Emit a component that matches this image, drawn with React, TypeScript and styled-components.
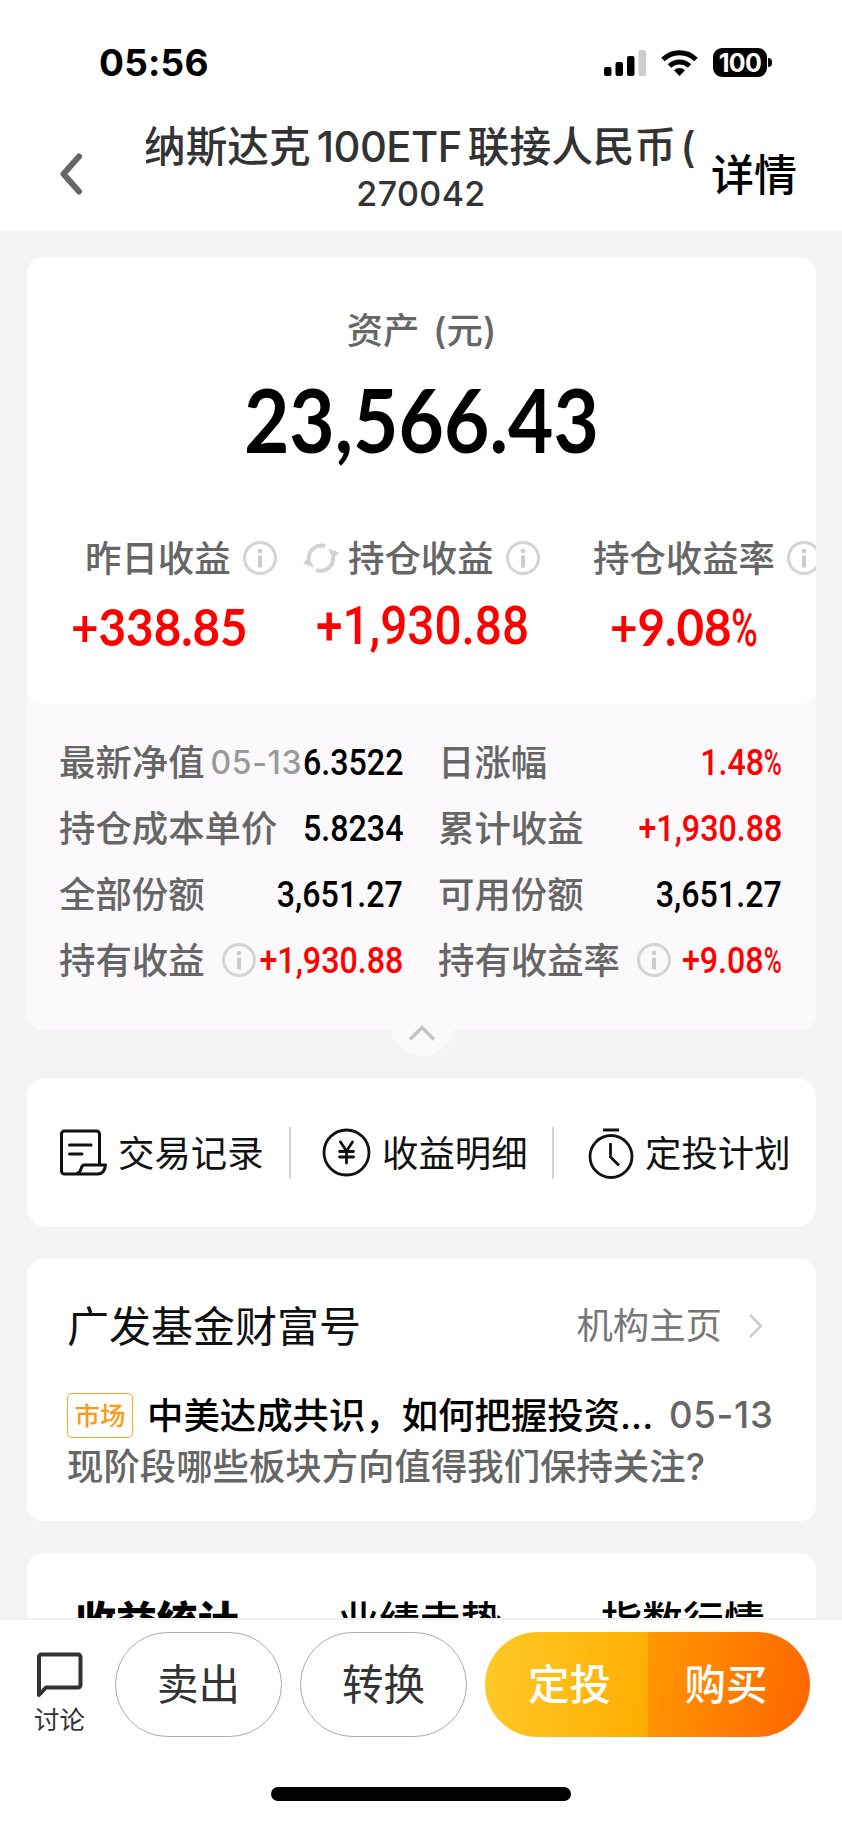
import React from "react";
import styled, { createGlobalStyle } from "styled-components";

const Global = createGlobalStyle`
  * { box-sizing: border-box; }
  body {
    margin: 0;
    background: #f4f4f4;
    font-family: Inter, "Noto Sans CJK SC", sans-serif;
    color: #000;
  }
`;

const Screen = styled.div`
  width: 842px;
  height: 1823px;
  overflow: hidden;
  display: flex;
  flex-direction: column;
  white-space: nowrap;
`;

const StatusBar = styled.div`
  height: 125px;
  flex: none;
  background: #fff;
  display: flex;
  justify-content: space-between;
  align-items: center;
  padding: 0 70px 0 99px;
`;
const Clock = styled.div`
  font-size: 37px;
  font-weight: 700;
  letter-spacing: 0.2px;
`;
const StatusIcons = styled.div`
  display: flex;
  align-items: center;
  gap: 15px;
`;
const Battery = styled.div`
  position: relative;
  width: 54px;
  height: 29px;
  border-radius: 9px;
  background: #000;
  color: #fff;
  font-size: 25px;
  font-weight: 700;
  line-height: 30px;
  text-align: center;
  letter-spacing: -0.6px;
  margin-right: 5px;
  &::after {
    content: "";
    position: absolute;
    right: -5px;
    top: 10px;
    width: 4px;
    height: 9px;
    border-radius: 0 4px 4px 0;
    background: #000;
  }
`;

const NavBar = styled.header`
  height: 106px;
  flex: none;
  background: #fff;
  display: flex;
  color: #333;
`;
const Back = styled.div`
  width: 146px;
  padding: 27px 0 0 57px;
`;
const TitleBlock = styled.div`
  width: 550px;
  display: flex;
  flex-direction: column;
  align-items: center;
`;
const TitleClip = styled.div`
  width: 550px;
  height: 46px;
  overflow: hidden;
  display: flex;
  font-size: 41.7px;
  line-height: 44px;
  font-weight: 500;
`;
const TitleText = styled.div`
  margin-left: -2px;
`;
const TitleLatin = styled.span`
  margin: 0 6px 0 6px;
  letter-spacing: -0.5px;
`;
const TitleParen = styled.span`
  margin-left: 4px;
`;
const Code = styled.div`
  font-size: 34px;
  line-height: 44px;
  font-weight: 500;
  letter-spacing: 0.4px;
  margin-top: 1px;
`;
const DetailLink = styled.div`
  margin: 24px 0 0 15px;
  font-size: 43px;
  line-height: 52px;
  font-weight: 500;
  color: #000;
`;

const Body = styled.main`
  height: 1387px;
  flex: none;
  overflow: hidden;
  padding: 26px 26px 0 27px;
`;

const Card = styled.section<{ $h: number; $gap: number; $r?: number }>`
  height: ${(p) => p.$h}px;
  margin-bottom: ${(p) => p.$gap}px;
  border-radius: ${(p) => p.$r ?? 16}px;
  background: #fff;
`;

const AssetCard = styled(Card)`
  position: relative;
  background: #fbf9fb;
`;
const Summary = styled.div`
  height: 447px;
  border-radius: 16px;
  background: #fff;
  overflow: hidden;
`;
const AssetLabel = styled.div`
  padding-top: 49px;
  font-size: 36.4px;
  line-height: 50px;
  text-align: center;
  word-spacing: 4px;
  font-weight: 500;
  color: #666;
`;
const Num = styled.span<{ $size: number; $x?: number; $origin?: string; $red?: boolean; $face?: string; $weight?: number }>`
  display: inline-block;
  font-family: ${(p) => p.$face ?? "Lato"}, sans-serif;
  font-size: ${(p) => p.$size}px;
  font-weight: ${(p) => p.$weight ?? 700};
  transform: scaleX(${(p) => p.$x ?? 0.87});
  transform-origin: ${(p) => p.$origin ?? "center"};
  color: ${(p) => (p.$red ? "#fe0000" : "#000")};
`;
const Percent = styled.span`
  display: inline-block;
  width: 0.56em;
  font-family: Roboto, sans-serif;
  font-weight: 500;
  transform: scaleX(0.76);
  transform-origin: left;
`;
const Total = styled.div`
  height: 100px;
  margin-top: 13px;
  line-height: 100px;
  text-align: center;
`;
const Stats = styled.div`
  display: grid;
  grid-template-columns: repeat(3, 263px);
  margin-top: 58px;
`;
const Stat = styled.div<{ $pad: number }>`
  display: flex;
  flex-direction: column;
  padding-left: ${(p) => p.$pad}px;
`;
const StatLabel = styled.div`
  display: flex;
  align-items: center;
  height: 58px;
  font-size: 36.4px;
  color: #666;
  font-weight: 500;
`;
const StatValue = styled.div<{ $shift: number }>`
  height: 70px;
  line-height: 70px;
  margin-top: 6px;
  margin-left: ${(p) => p.$shift}px;
`;
const InfoSvg = styled.svg<{ $ml?: number }>`
  flex: none;
  margin-left: ${(p) => p.$ml ?? 12}px;
  margin-top: 4px;
`;
const RefreshSvg = styled.svg`
  flex: none;
  margin: 4px 9px 0 0;
`;

const Details = styled.div`
  display: grid;
  grid-template-columns: 344px 344px;
  column-gap: 35px;
  grid-auto-rows: 66px;
  padding: 23px 0 0 32px;
`;
const Detail = styled.div`
  display: flex;
  align-items: center;
  font-size: 36.4px;
  font-weight: 500;
  color: #666;
`;
const NavDate = styled.span`
  width: 93px;
  margin: 4px 0 0 6px;
  font-size: 32px;
  letter-spacing: 0.6px;
  color: #999;
`;
const DetailValue = styled.div`
  width: 0;
  margin: 4px 0 0 auto;
  display: flex;
  justify-content: flex-end;
`;
const Collapse = styled.div`
  position: absolute;
  left: 363px;
  top: 735px;
  width: 64px;
  height: 64px;
  border-radius: 50%;
  background: #fbf9fb;
  display: flex;
  justify-content: center;
  padding-top: 32px;
`;

const ActionCard = styled(Card)`
  display: grid;
  grid-template-columns: repeat(3, 263px);
  align-items: center;
`;
const Action = styled.div<{ $line?: boolean }>`
  position: relative;
  height: 52px;
  display: flex;
  align-items: center;
  padding-left: 32px;
  font-size: 36.4px;
  color: #111;
  svg { flex: none; margin-right: 11px; }
  &::after {
    content: "";
    display: ${(p) => (p.$line ? "block" : "none")};
    position: absolute;
    right: -1px;
    top: 0;
    width: 2px;
    height: 52px;
    background: #d2d2d2;
  }
`;
const ActionText = styled.span`
  margin-top: -3px;
`;

const FundCard = styled(Card)`
  padding: 36px 40px 0 40px;
`;
const FundHead = styled.div`
  display: flex;
  align-items: center;
  height: 56px;
  font-size: 42px;
  color: #111;
`;
const FundLink = styled.div`
  margin-left: auto;
  margin-right: 13px;
  display: flex;
  align-items: center;
  font-size: 36.4px;
  color: #777;
  svg { margin: 6px 0 0 26px; }
`;
const NewsRow = styled.div`
  display: flex;
  align-items: center;
  height: 52px;
  margin-top: 38px;
  font-size: 36.4px;
  font-weight: 500;
`;
const Tag = styled.span`
  width: 66px;
  height: 45px;
  line-height: 43px;
  border: 1.5px solid #f9a72b;
  border-radius: 5px;
  color: #f99c12;
  font-size: 25.5px;
  font-weight: 500;
  text-align: center;
  margin: 0 14px 0 0;
`;
const Headline = styled.span`
  width: 522px;
  margin-top: -4px;
`;
const NewsDate = styled.span`
  color: #666;
  font-size: 36.5px;
  font-weight: 550;
  letter-spacing: 0.7px;
`;
const NewsSub = styled.div`
  height: 52px;
  line-height: 52px;
  font-size: 36.4px;
  font-weight: 500;
  color: #666;
`;

const Tabs = styled(Card)`
  display: grid;
  grid-template-columns: repeat(3, 263px);
  padding: 40px 0 0 48px;
  font-size: 40.9px;
  line-height: 56px;
  font-weight: 500;
`;
const Tab = styled.div<{ $on?: boolean }>`
  font-weight: ${(p) => (p.$on ? 900 : 500)};
`;

const Footer = styled.footer`
  position: relative;
  height: 205px;
  flex: none;
  background: #fff;
  border-top: 2px solid #f0f0f0;
`;
const Buttons = styled.div`
  display: flex;
  padding: 12px 0 0 16px;
  color: #333;
`;
const Discuss = styled.div`
  width: 99px;
  padding: 20px 0 0 18px;
  font-size: 25.5px;
  line-height: 34px;
  svg { display: block; margin: 0 0 4px 2px; }
`;
const Pill = styled.div`
  width: 167px;
  height: 105px;
  margin-right: 18px;
  border: 1.5px solid #aaa;
  border-radius: 53px;
  font-size: 41.5px;
  line-height: 104px;
  text-align: center;
`;
const Trade = styled.div`
  display: flex;
  width: 325px;
  height: 105px;
  border-radius: 53px;
  overflow: hidden;
  color: #fff;
  font-size: 41.5px;
  line-height: 107px;
  font-weight: 500;
`;
const Half = styled.div<{ $from: string; $to: string; $pad: number }>`
  width: 50%;
  padding-left: ${(p) => p.$pad}px;
  background: linear-gradient(100deg, ${(p) => p.$from}, ${(p) => p.$to});
`;
const HomeBar = styled.div`
  width: 300px;
  height: 14px;
  margin: 50px 0 0 271px;
  border-radius: 7px;
  background: #000;
`;

const Info = ({ ml }: { ml?: number }) => (
  <InfoSvg $ml={ml} width="34" height="34" viewBox="0 0 34 34" fill="none">
    <circle cx="17" cy="17" r="15.5" stroke="#d4d4d4" strokeWidth="3" />
    <circle cx="17" cy="10" r="2.3" fill="#ccc" />
    <path d="M17 14.500V26.500" stroke="#ccc" strokeWidth="4" />
  </InfoSvg>
);

const Refresh = () => (
  <RefreshSvg width="36" height="30" viewBox="0 0 36 30" fill="none">
    <path d="M22 3A12.500 12.500 0 0 0 6 16" stroke="#d2d2d2" strokeWidth="4" />
    <path d="M13 27A12.500 12.500 0 0 0 30 14" stroke="#d2d2d2" strokeWidth="4" />
    <path d="M0 20.500L6 14L11 24.500Z" fill="#d2d2d2" />
    <path d="M36 9.500L30 16L25 5.500Z" fill="#d2d2d2" />
  </RefreshSvg>
);

const renderValue = (value: string) =>
  value.endsWith("%") ? (
    <>
      {value.slice(0, -1)}
      <Percent>%</Percent>
    </>
  ) : (
    value
  );

type Row = { label: string; value: string; red?: boolean; date?: string; info?: number };
const rows: Row[] = [
  { label: "最新净值", value: "6.3522", date: "05-13" },
  { label: "日涨幅", value: "1.48%", red: true },
  { label: "持仓成本单价", value: "5.8234" },
  { label: "累计收益", value: "+1,930.88", red: true },
  { label: "全部份额", value: "3,651.27" },
  { label: "可用份额", value: "3,651.27" },
  { label: "持有收益", value: "+1,930.88", red: true, info: 17 },
  { label: "持有收益率", value: "+9.08%", red: true, info: 17 },
];

export default function App() {
  return (
    <Screen>
      <Global />
      <StatusBar>
        <Clock>05:56</Clock>
        <StatusIcons>
          <svg width="42" height="28" viewBox="0 0 42 28">
            <rect x="0" y="18" width="7.500" height="9" rx="2" />
            <rect x="11.500" y="13" width="7.500" height="14" rx="2" />
            <rect x="23" y="7" width="7.500" height="20" rx="2" />
            <rect x="34.500" y="1" width="7.500" height="26" rx="2" fill="#ccc" />
          </svg>
          <svg width="37" height="28" viewBox="0 0 37 28" fill="none" stroke="#000" strokeWidth="5">
            <path d="M2 10.500A23.500 23.500 0 0 1 35 10.500" />
            <path d="M8.500 17A14.300 14.300 0 0 1 28.500 17" />
            <path d="M18.500 27L13 21.200A8 8 0 0 1 24 21.200Z" fill="#000" stroke="none" />
          </svg>
          <Battery>100</Battery>
        </StatusIcons>
      </StatusBar>
      <NavBar>
        <Back>
          <svg width="26" height="44" viewBox="0 0 26 44" fill="none" stroke="#666" strokeWidth="6" strokeLinecap="round" strokeLinejoin="round">
            <path d="M22 4.500L6.500 22L22 39.500" />
          </svg>
        </Back>
        <TitleBlock>
          <TitleClip>
            <TitleText>
              纳斯达克<TitleLatin>100ETF</TitleLatin>联接人民币<TitleParen>(</TitleParen>
            </TitleText>
          </TitleClip>
          <Code>270042</Code>
        </TitleBlock>
        <DetailLink>详情</DetailLink>
      </NavBar>
      <Body>
        <AssetCard $h={773} $gap={48}>
          <Summary>
            <AssetLabel>资产 (元)</AssetLabel>
            <Total>
              <Num $size={88} $x={0.89}>23,566.43</Num>
            </Total>
            <Stats>
              <Stat $pad={58}>
                <StatLabel>昨日收益<Info /></StatLabel>
                <StatValue $shift={-14}><Num $size={52.5} $x={0.905} $red $origin="left">+338.85</Num></StatValue>
              </Stat>
              <Stat $pad={13}>
                <StatLabel><Refresh />持仓收益<Info /></StatLabel>
                <StatValue $shift={13}><Num $size={53} $x={0.9} $red $origin="left" $face="Roboto" $weight={500}>+1,930.88</Num></StatValue>
              </Stat>
              <Stat $pad={40}>
                <StatLabel>持仓收益率<Info /></StatLabel>
                <StatValue $shift={17}><Num $size={52.5} $x={0.905} $red $origin="left">{renderValue("+9.08%")}</Num></StatValue>
              </Stat>
            </Stats>
          </Summary>
          <Details>
            {rows.map((r) => (
              <Detail key={r.label}>
                {r.label}
                {r.date && <NavDate>{r.date}</NavDate>}
                {r.info && <Info ml={r.info} />}
                <DetailValue>
                  <Num $size={37} $red={r.red} $origin="right" $face="Roboto" $weight={500}>{renderValue(r.value)}</Num>
                </DetailValue>
              </Detail>
            ))}
          </Details>
          <Collapse>
            <svg width="28" height="18" viewBox="0 0 28 18" fill="none" stroke="#c4c4c4" strokeWidth="3.500">
              <path d="M2 15.500L14 3.500L26 15.500" />
            </svg>
          </Collapse>
        </AssetCard>

        <ActionCard $h={149} $gap={32} $r={20}>
          <Action $line>
            <svg width="48" height="50" viewBox="0 0 48 50" fill="none" stroke="#111" strokeWidth="3" strokeLinejoin="round" strokeLinecap="round">
              <path d="M40.500 37V6a3 3 0 0 0-3-3H5.500a3 3 0 0 0-3 3v37a3 3 0 0 0 3 3h33q7 0 8-9H25q-2 0-3 4t-5 5" />
              <path d="M10.500 17H32M10.500 26H23" />
            </svg>
            <ActionText>交易记录</ActionText>
          </Action>
          <Action $line>
            <svg width="49" height="49" viewBox="0 0 49 49" fill="none" stroke="#111" strokeWidth="2.800" strokeLinecap="round">
              <circle cx="24.500" cy="24.500" r="22.500" />
              <path d="M18.500 14L24.500 23L30.500 14M24.500 23V35M17.500 23.500H31.500M17.500 29H31.500" />
            </svg>
            <ActionText>收益明细</ActionText>
          </Action>
          <Action>
            <svg width="49" height="52" viewBox="0 0 49 52" fill="none" stroke="#111" strokeWidth="2.800">
              <circle cx="26" cy="29.500" r="21" />
              <path d="M18 3H34M25.500 16V30L34 38.500" />
            </svg>
            <ActionText>定投计划</ActionText>
          </Action>
        </ActionCard>

        <FundCard $h={262} $gap={32}>
          <FundHead>
            广发基金财富号
            <FundLink>
              机构主页
              <svg width="15" height="26" viewBox="0 0 15 26" fill="none" stroke="#ccc" strokeWidth="2.500">
                <path d="M2 2L13 13L2 24" />
              </svg>
            </FundLink>
          </FundHead>
          <NewsRow>
            <Tag>市场</Tag>
            <Headline>中美达成共识，如何把握投资...</Headline>
            <NewsDate>05-13</NewsDate>
          </NewsRow>
          <NewsSub>现阶段哪些板块方向值得我们保持关注?</NewsSub>
        </FundCard>

        <Tabs $h={160} $gap={0}>
          <Tab $on>收益统计</Tab>
          <Tab>业绩走势</Tab>
          <Tab>指数行情</Tab>
        </Tabs>
      </Body>
      <Footer>
        <Buttons>
          <Discuss>
            <svg width="48" height="47" viewBox="0 0 48 47" fill="none" stroke="#333" strokeWidth="4" strokeLinejoin="round">
              <path d="M3 43V5a2.500 2.500 0 0 1 2.500-2.500H42a2.500 2.500 0 0 1 2.500 2.500V33a2.500 2.500 0 0 1-2.500 2.500H10Z" />
            </svg>
            讨论
          </Discuss>
          <Pill>卖出</Pill>
          <Pill>转换</Pill>
          <Trade>
            <Half $from="#ffca28" $to="#ffac00" $pad={43}>定投</Half>
            <Half $from="#ff9800" $to="#ff6500" $pad={37}>购买</Half>
          </Trade>
        </Buttons>
        <HomeBar />
      </Footer>
    </Screen>
  );
}
